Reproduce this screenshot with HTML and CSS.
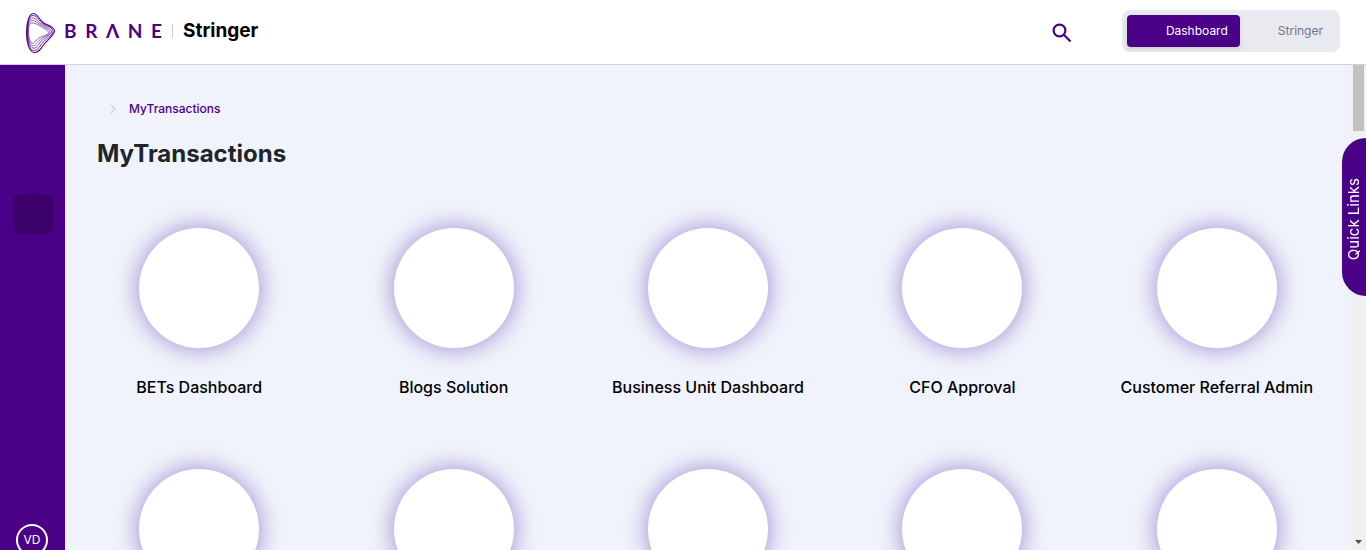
FILE: index.html
```html
<!DOCTYPE html>
<html lang="en">
<head>
<meta charset="utf-8">
<title>MyTransactions</title>
<link rel="stylesheet" href="styles.css">
</head>
<body>
<header class="topbar">
  <a class="brand" href="#">
    <svg class="brand-mark" width="32" height="42" viewBox="0 0 32 42" fill="none" stroke="#4b0088">
      <path d="M8.500 1.500C12 1.500 14 7 18 10.500C22 13.500 29.500 14.500 29.500 19C29.500 23 22 28 18.500 33C15.500 37.500 13 41 9 40.500C4 40 1.500 30 1.500 21C1.500 11 4 1.500 8.500 1.500Z" stroke-width="1.100"/>
      <path d="M8 3.500C12 3.500 14 9 18 11.500C22 14 28 15.500 28 19.500C28 23 20 27.500 17 31.500C14 35.500 12 39 8.500 38.500C4.500 38 2 29 2 20.500C2 11.500 4 3.500 8 3.500Z" stroke-width=".8"/>
      <path d="M7.500 6C11 6 13.500 10.500 17.500 12.500C21 14.500 26.500 16.500 26.500 20C26 23 18.500 26 15.500 30C13 33.500 11 37 8 36C4.500 35 2.500 28 2.500 20.500C2.500 12.500 4 6 7.500 6Z" stroke-width=".7"/>
      <path d="M7 8.500C10.500 8.500 13 11.500 16.500 13.500C20 15.500 25 17.500 25 20.500C24.500 23.500 17 25 14 28.500C11.500 31.500 10 34.500 7.500 33.500C4.500 32 3 27 3 20.500C3 13.500 4 8.500 7 8.500Z" stroke-width=".6"/>
      <path d="M6.500 11C9.500 10.500 13 13 16 14.500C19.500 16.500 23.500 18.500 23.500 21C23 23.500 15.500 24 12.500 27C10.500 29 9 32 7 31C4.500 29.500 3.500 25 3.500 20C3.500 15 4 11.500 6.500 11Z" stroke-width=".6"/>
    </svg>
    <span class="brand-name"><span>B</span><span>R</span><span>Λ</span><span>N</span><span>E</span></span>
    <span class="brand-divider"></span>
    <span class="brand-product">Stringer</span>
  </a>
  <button class="search" type="button" aria-label="Search">
    <svg width="20" height="20" viewBox="0 0 20 20" fill="none" stroke="#4b0088" stroke-width="2.200">
      <circle cx="7.500" cy="7.500" r="5.900"/>
      <path d="M11.800 11.800L18.500 18.500"/>
    </svg>
  </button>
  <nav class="switch">
    <button class="switch-item active" type="button">Dashboard</button>
    <button class="switch-item" type="button">Stringer</button>
  </nav>
</header>
<div class="shell">
  <aside class="sidebar">
    <button class="side-item" type="button" aria-label="Current section"></button>
    <button class="avatar" type="button">VD</button>
  </aside>
  <main class="content">
    <nav class="crumbs">
      <svg width="8" height="10" viewBox="0 0 8 10" fill="none" stroke="#d3d5dd" stroke-width="1.500"><path d="M2 1L6 5L2 9"/></svg>
      <a href="#">MyTransactions</a>
    </nav>
    <h1>MyTransactions</h1>
    <div class="grid">
      <a class="card" href="#"><span class="disc"></span><span>BETs Dashboard</span></a>
      <a class="card" href="#"><span class="disc"></span><span>Blogs Solution</span></a>
      <a class="card" href="#"><span class="disc"></span><span>Business Unit Dashboard</span></a>
      <a class="card" href="#"><span class="disc"></span><span>CFO Approval</span></a>
      <a class="card" href="#"><span class="disc"></span><span>Customer Referral Admin</span></a>
      <span class="card"><span class="disc"></span></span>
      <span class="card"><span class="disc"></span></span>
      <span class="card"><span class="disc"></span></span>
      <span class="card"><span class="disc"></span></span>
      <span class="card"><span class="disc"></span></span>
    </div>
  </main>
  <div class="scroll">
    <span class="scroll-thumb"></span>
    <svg width="7" height="4" viewBox="0 0 7 4" fill="#505050"><path d="M0 0H7L3.500 4Z"/></svg>
  </div>
</div>
<button class="quick" type="button">Quick Links</button>
</body>
</html>
```
FILE: styles.css
```css
* { box-sizing: border-box; }
body {
  margin: 0;
  height: 100vh;
  display: flex;
  flex-direction: column;
  overflow: hidden;
  font-family: Inter, "Liberation Sans", sans-serif;
  background: #fff;
}
button { border: 0; padding: 0; font: inherit; cursor: pointer; }
a { text-decoration: none; }

.topbar {
  flex: none;
  display: flex;
  align-items: center;
  height: 65px;
  padding: 0 26px 3px 25px;
  border-bottom: 1px solid #dcc8e8;
}
.brand { display: flex; align-items: center; margin-right: auto; color: #000; }
.brand-mark { margin-top: 4px; }
.brand-name {
  display: flex;
  justify-content: space-between;
  width: 98px;
  margin-left: 7px;
  font: 700 19px/24px Lato, sans-serif;
  color: #4b0088;
}
.brand-divider { width: 1px; height: 14px; margin: 0 10px; background: #ccc; }
.brand-product { font-size: 19px; line-height: 24px; font-weight: 700; }
.search { width: 20px; height: 20px; margin: 4px 50px 0 0; background: none; }
.search svg { display: block; }
.switch {
  display: flex;
  height: 42px;
  padding: 5px;
  border-radius: 8px;
  background: #e9eaf0;
}
.switch-item {
  padding: 0 12px 0 38px;
  border-radius: 4px;
  background: none;
  font-size: 12px;
  color: #6f7390;
}
.switch-item.active {
  padding: 0 12px 0 39px;
  background: #4b0088;
  color: #fff;
  box-shadow: 0 2px 4px rgba(0, 0, 0, .12);
}

.shell { flex: 1; min-height: 0; display: flex; }
.sidebar {
  flex: none;
  width: 65px;
  display: flex;
  flex-direction: column;
  align-items: center;
  justify-content: space-between;
  padding-top: 129px;
  background: #4b0088;
}
.side-item { flex: none; width: 40px; height: 40px; border-radius: 8px; background: #3b006a; }
.avatar {
  flex: none;
  align-self: flex-start;
  width: 32px;
  height: 32px;
  margin: 0 0 -6px 16px;
  border: 2px solid #fff;
  border-radius: 50%;
  background: none;
  font-size: 12px;
  line-height: 26px;
  color: #fff;
}
.content { flex: 1; min-width: 0; overflow: hidden; padding: 34px 7px 0; background: #f0f3fb; }
.crumbs {
  display: flex;
  align-items: center;
  gap: 12px;
  padding-left: 37px;
  font-size: 12px;
  line-height: 20px;
  font-weight: 500;
}
.crumbs a { color: #4b0088; }
h1 { margin: 20px 25px 0; font-size: 24px; line-height: 30px; font-weight: 700; color: #212529; }
.grid {
  display: grid;
  grid-template-columns: repeat(5, 1fr);
  row-gap: 71px;
  margin-top: 59px;
}
.card {
  display: flex;
  flex-direction: column;
  align-items: center;
  gap: 27px;
  height: 170px;
  font-size: 16px;
  line-height: 24px;
  font-weight: 500;
  color: #000;
}
.disc {
  flex: none;
  width: 120px;
  height: 120px;
  border-radius: 50%;
  background: #fff;
  box-shadow: 0 0 22px 2px rgba(75, 20, 170, .42);
}
.scroll {
  flex: none;
  width: 15px;
  display: flex;
  flex-direction: column;
  align-items: center;
  justify-content: space-between;
  padding-bottom: 6px;
  background: #f0f0f0;
}
.scroll-thumb { width: 11px; height: 66px; background: #c1c1c1; }
.quick {
  position: fixed;
  right: 0;
  top: 138px;
  width: 24px;
  height: 158px;
  padding-top: 4px;
  border-radius: 24px 0 0 24px;
  background: #4b0088;
  font-size: 15px;
  line-height: 24px;
  color: #fff;
  writing-mode: sideways-lr;
}
```
